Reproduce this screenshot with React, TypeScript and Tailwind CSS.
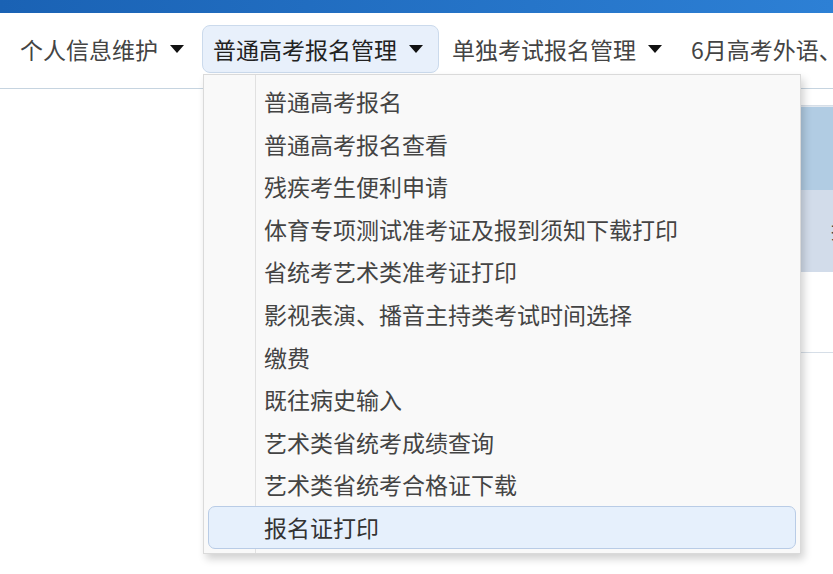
const font = { fontFamily: '"Noto Sans CJK SC", "Noto Sans", sans-serif' };

const navItems = ["个人信息维护", "普通高考报名管理", "单独考试报名管理", "6月高考外语、艺术类考试管理"];

const menuItems = [
  "普通高考报名",
  "普通高考报名查看",
  "残疾考生便利申请",
  "体育专项测试准考证及报到须知下载打印",
  "省统考艺术类准考证打印",
  "影视表演、播音主持类考试时间选择",
  "缴费",
  "既往病史输入",
  "艺术类省统考成绩查询",
  "艺术类省统考合格证下载",
  "报名证打印",
];

const Caret = () => (
  <svg width="14" height="8" viewBox="0 0 14 8" className="shrink-0">
    <path d="M0 0 L14 0 L7 8 Z" fill="#111" />
  </svg>
);

export default function App() {
  return (
    <div className="w-[833px] h-[574px] overflow-hidden bg-white text-[#333]" style={font}>
      {/* top bar */}
      <div className="h-[13px] bg-gradient-to-r from-[#1a62b4] to-[#2d80d5]" />

      {/* nav */}
      <nav className="h-[76px] border-b border-[#c6d4e0] flex items-start gap-[2px] pl-[9px] pt-[12px] whitespace-nowrap">
        {navItems.map((label, i) => {
          const active = i === 1;
          return (
            <div
              key={label}
              className={
                active
                  ? "relative h-[48px] flex items-center gap-[12px] pl-[10px] pr-[15px] rounded-[8px] border border-[#cbdaec] bg-[#e8f0fb] text-[23px] text-[#222]"
                  : "relative h-[48px] flex items-center gap-[12px] pl-[11px] pr-[16px] text-[23px] text-[#444]"
              }
            >
              <span>{label}</span>
              {i < 3 && <Caret />}

              {active && (
                <div className="absolute left-[0px] top-[48px] z-10 w-[598px] h-[480px] bg-[#f9f9f9] border border-[#dadada] shadow-[3px_5px_8px_rgba(0,0,0,0.18)] py-[5px]">
                  <div className="absolute left-[51px] top-0 bottom-0 w-px bg-[#e1e1e1]" />
                  {menuItems.map((m, j) => (
                    <div
                      key={m}
                      className={
                        j === menuItems.length - 1
                          ? "relative mx-[4px] h-[43px] flex items-center pl-[55px] rounded-[7px] border border-[#b9cce6] bg-[#e6f0fc] text-[23px] text-[#333]"
                          : "relative mx-[5px] h-[42.6px] flex items-center pl-[55px] text-[23px] text-[#444]"
                      }
                    >
                      {m}
                    </div>
                  ))}
                </div>
              )}
            </div>
          );
        })}
      </nav>

      {/* content table (mostly covered by menu) */}
      <div className="pt-[16px] pl-[230px]">
        <div className="border-t border-b border-[#d6dee7]">
          <div className="h-[84px] bg-[#b1cce3] border-t border-[#e2e8ef]" />
          <div className="h-[82px] bg-[#d2dcea] flex items-center pl-[601px] whitespace-nowrap text-[20px] text-[#444]">报名</div>
          <div className="h-[80px] bg-white" />
        </div>
      </div>
    </div>
  );
}
